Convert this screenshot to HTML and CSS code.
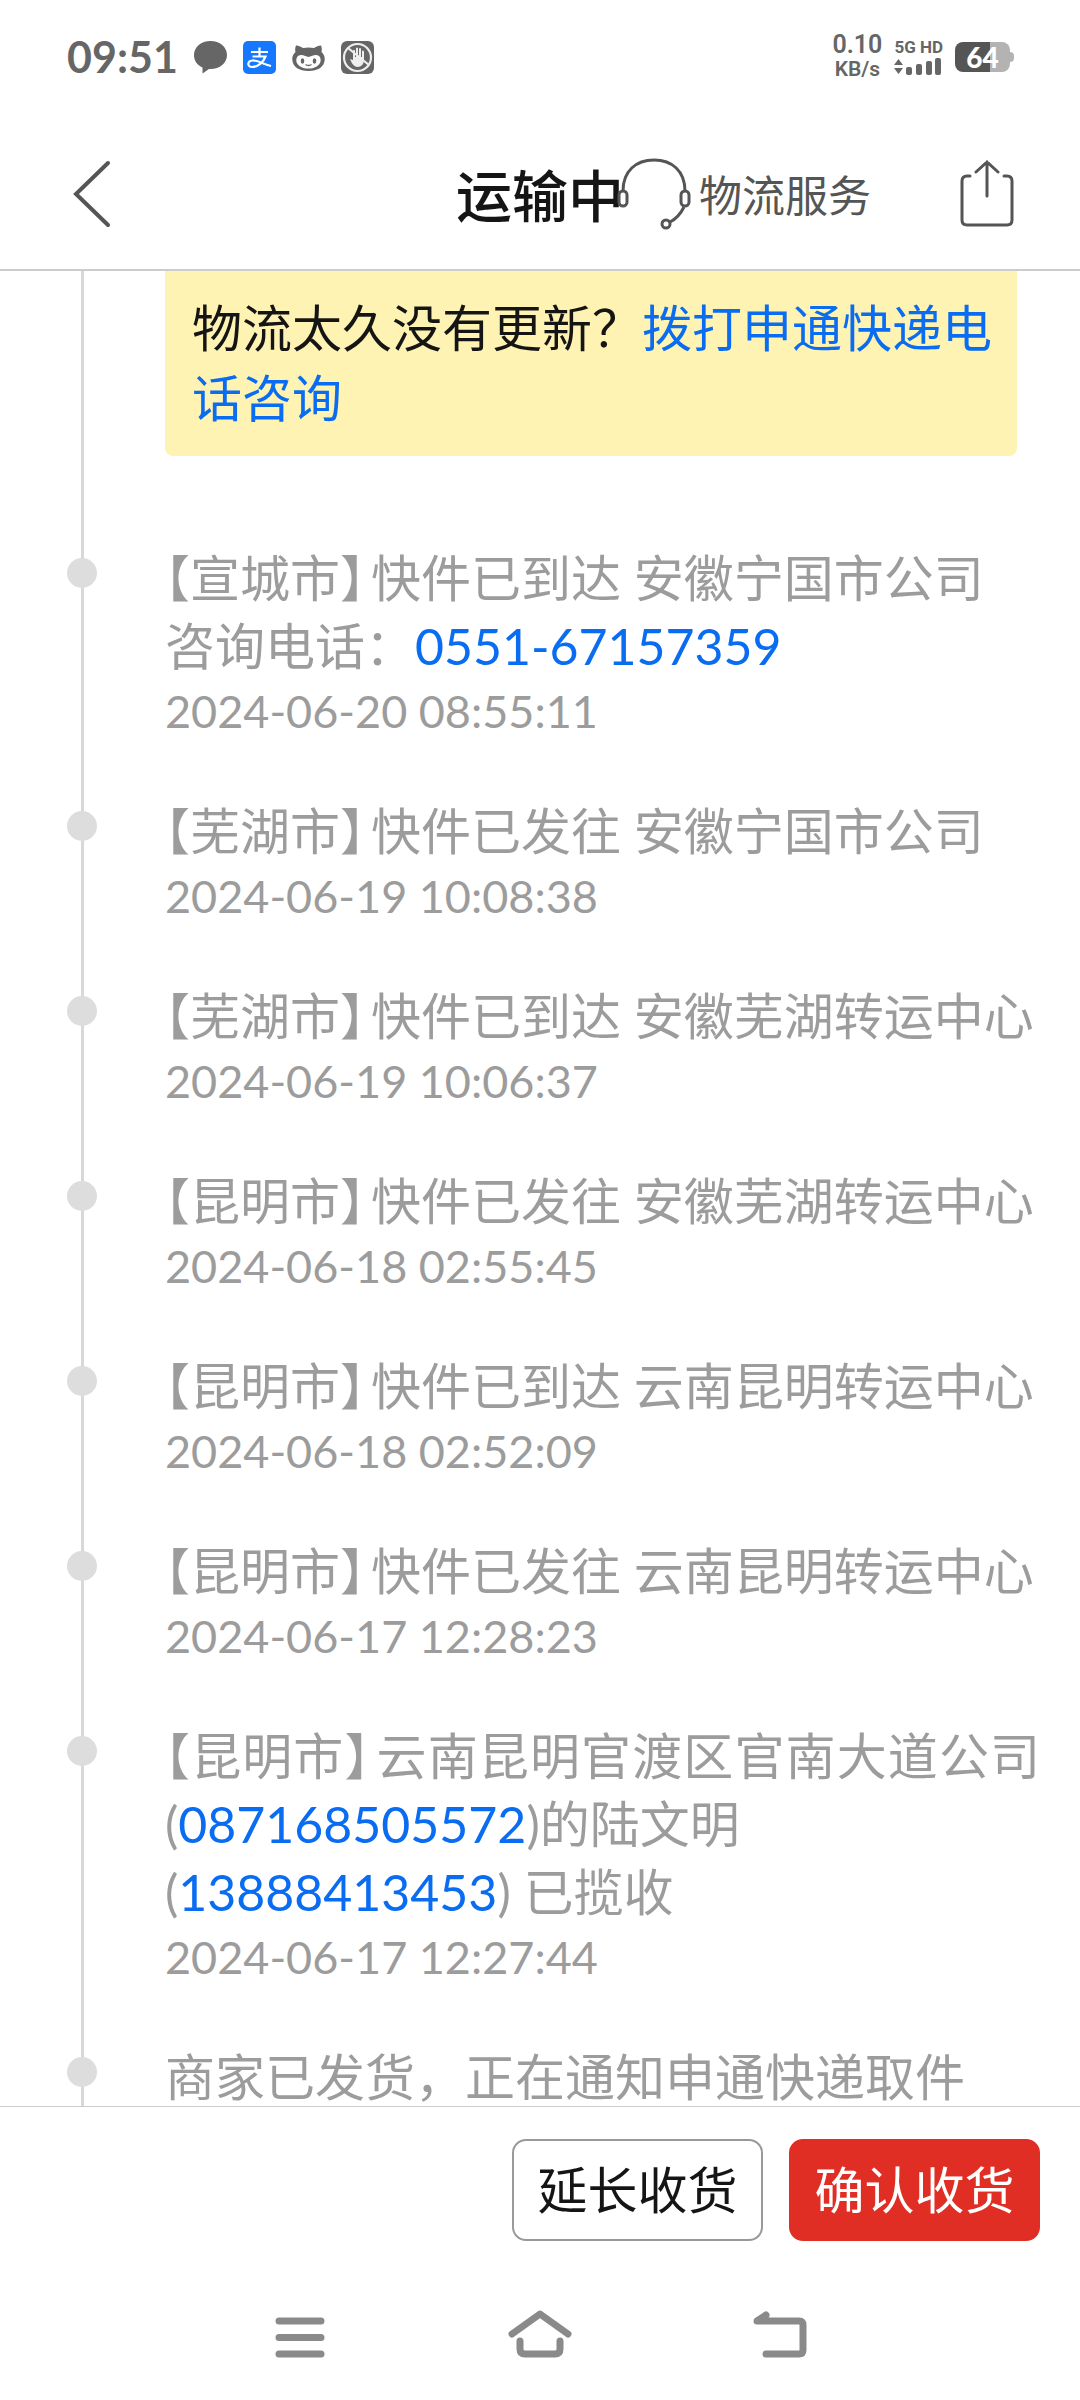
FILE: index.html
```html
<!DOCTYPE html>
<html lang="zh-CN">
<head>
<meta charset="utf-8">
<meta name="viewport" content="width=device-width, initial-scale=1">
<title>运输中</title>
<link rel="stylesheet" href="styles.css">
</head>
<body>
<div class="status">
  <div class="status-left">
    <span class="clock">09:51</span>
    <svg class="status-icon" viewBox="0 0 33 33" aria-hidden="true"><path fill="#666" d="M16.500 0C25.800 0 33 6 33 14S25.800 28 16.500 28L15 28 8.500 32.500V26.500C3 24 0 19.500 0 14 0 6 7.200 0 16.500 0Z"/></svg>
    <svg class="status-icon" viewBox="0 0 33 33" aria-hidden="true"><rect width="33" height="33" rx="5" fill="#1677ff"/><g fill="none" stroke="#fff" stroke-width="2.200"><path d="M8 11H25M16.500 6.500V15.500M9.500 15.500H22.500C20.500 21 15 26 9 26 4 26 4 20 9.500 19.500 15 19 21 23.500 28 25"/></g></svg>
    <svg class="status-icon" viewBox="0 0 33 33" aria-hidden="true"><path fill="#666" d="M4 4.500C7 4.500 9.500 6 11 7 15 6.300 18 6.300 22 7 23.500 6 26 4.500 29 4.500 30 7 30 9 29.500 11 32 13 33 16 32.700 19 32 26 26 30 16.500 30S1 26 .3 19C0 16 1 13 3.500 11 3 9 3 7 4 4.500Z"/><path fill="#fff" d="M6 15C10 12.500 14 16 16.500 16S23 12.500 27 15C31 19 28 27.500 16.500 27.500S2 19 6 15Z"/><g fill="#666"><ellipse cx="10.500" cy="20" rx="1.800" ry="2.800"/><ellipse cx="22.500" cy="20" rx="1.800" ry="2.800"/></g><path d="M13.500 23.500Q16.500 25.500 19.500 23.500" fill="none" stroke="#666" stroke-width="1.300"/></svg>
    <svg class="status-icon" viewBox="0 0 33 33" aria-hidden="true"><rect width="33" height="33" rx="6" fill="#666"/><circle cx="16.500" cy="16.500" r="13.500" fill="none" stroke="#eee" stroke-width="2.200"/><path fill="#eee" d="M9 18 12 19V9.500Q13 8 14 9.500V16H15V7Q16 6 17 7V16H18V7.500Q19 6.500 20 7.500V16H21V10Q22 9 23 10.500V19Q22.500 26 16.500 26 12 26 9 18Z"/><path d="M7 7 28 24" stroke="#eee" stroke-width="2.200"/></svg>
  </div>
  <div class="status-right">
    <div class="speed"><span class="speed-value">0.10</span><span class="speed-unit">KB/s</span></div>
    <div class="signal">
      <span class="signal-label">5G HD</span>
      <svg class="signal-bars" viewBox="0 0 48 17" aria-hidden="true"><g fill="#666"><path d="M0 7 4.500 1 9 7ZM0 10H9L4.500 16Z"/><rect x="12" y="9" width="6" height="8" rx="2"/><rect x="22" y="6" width="6" height="11" rx="2"/><rect x="32" y="3" width="6" height="14" rx="2"/><rect x="41" y="0" width="6" height="17" rx="2"/></g></svg>
    </div>
    <div class="battery">64</div>
  </div>
</div>

<header class="header">
  <button class="icon-button back" type="button" aria-label="返回"><svg width="38" height="68" viewBox="0 0 38 68"><path d="M35 3 3 34 35 65" fill="none" stroke="#555" stroke-width="4" stroke-linecap="round"/></svg></button>
  <h1 class="title">运输中</h1>
  <div class="header-right">
    <a class="service" href="#service">
      <svg width="74" height="72" viewBox="0 0 74 72" aria-hidden="true"><g fill="none" stroke="#555" stroke-width="3"><path d="M6 33C6 13 19 2 37 2S68 13 68 33M67 49C63 57 59 61 53 64"/><rect x="2" y="33" width="8" height="15" rx="4"/><rect x="64" y="33" width="8" height="15" rx="4"/><circle cx="49" cy="66" r="4"/></g></svg>
      <span class="service-label">物流服务</span>
    </a>
    <button class="icon-button" type="button" aria-label="分享"><svg width="54" height="68" viewBox="0 0 54 68"><path d="M10 16H7Q2 16 2 21V60Q2 65 7 65H47Q52 65 52 60V21Q52 16 47 16H44M27 36V2M16 12 27 2 38 12" fill="none" stroke="#555" stroke-width="3" stroke-linecap="round"/></svg></button>
  </div>
</header>

<main class="scroll">
  <div class="timeline">
    <p class="notice">物流太久没有更新？<a href="#call">拨打申通快递电话咨询</a></p>
    <ol class="events">
      <li class="event"><p><span class="open">【</span>宣城市<span class="close">】</span>快件已到达 安徽宁国市公司<br>咨询电话：<a href="tel:0551-67157359">0551-67157359</a></p><time>2024-06-20 08:55:11</time></li>
      <li class="event"><p><span class="open">【</span>芜湖市<span class="close">】</span>快件已发往 安徽宁国市公司</p><time>2024-06-19 10:08:38</time></li>
      <li class="event"><p><span class="open">【</span>芜湖市<span class="close">】</span>快件已到达 安徽芜湖转运中心</p><time>2024-06-19 10:06:37</time></li>
      <li class="event"><p><span class="open">【</span>昆明市<span class="close">】</span>快件已发往 安徽芜湖转运中心</p><time>2024-06-18 02:55:45</time></li>
      <li class="event"><p><span class="open">【</span>昆明市<span class="close">】</span>快件已到达 云南昆明转运中心</p><time>2024-06-18 02:52:09</time></li>
      <li class="event"><p><span class="open">【</span>昆明市<span class="close">】</span>快件已发往 云南昆明转运中心</p><time>2024-06-17 12:28:23</time></li>
      <li class="event"><p><span class="full-line"><span class="open">【</span>昆明市<span class="close">】</span>云南昆明官渡区官南大道公司</span>(<a href="tel:087168505572">087168505572</a>)的陆文明<br>(<a href="tel:13888413453">13888413453</a>) 已揽收</p><time>2024-06-17 12:27:44</time></li>
      <li class="event"><p>商家已发货，正在通知申通快递取件</p></li>
    </ol>
  </div>
</main>

<footer class="actions">
  <button class="action" type="button">延长收货</button>
  <button class="action primary" type="button">确认收货</button>
</footer>

<nav class="system-nav" aria-label="系统导航">
  <button class="icon-button" type="button" aria-label="最近任务"><svg width="64" height="48" viewBox="0 0 64 48"><path d="M11 11H53M11 27.500H53M11 44H53" stroke="#8a8a8a" stroke-width="7" stroke-linecap="round"/></svg></button>
  <button class="icon-button" type="button" aria-label="主页"><svg width="64" height="48" viewBox="0 0 64 48"><path d="M4 24 32 4 60 24M12 31V39Q12 44 17 44H47Q52 44 52 39V31" fill="none" stroke="#8a8a8a" stroke-width="7" stroke-linecap="round" stroke-linejoin="round"/></svg></button>
  <button class="icon-button" type="button" aria-label="后退"><svg width="64" height="48" viewBox="0 0 64 48"><path d="M18 44H51Q55 44 55 40V15Q55 11 51 11H9L18 5" fill="none" stroke="#8a8a8a" stroke-width="7" stroke-linecap="round" stroke-linejoin="round"/></svg></button>
</nav>
</body>
</html>
```
FILE: styles.css
```css
* {
  box-sizing: border-box;
}

body {
  margin: 0;
  height: 100vh;
  display: flex;
  flex-direction: column;
  background: #fff;
  color: #151515;
  font-family: Lato, "Noto Sans CJK SC", sans-serif;
  font-size: 50px;
}

a {
  color: #0a6cf0;
  text-decoration: none;
}

button {
  font: inherit;
  cursor: pointer;
}

svg {
  display: block;
}

.icon-button {
  padding: 0;
  border: 0;
  background: none;
}

/* Status bar */
.status {
  height: 116px;
  flex: none;
  display: flex;
  align-items: center;
  justify-content: space-between;
  padding: 0 70px 2px 67px;
  color: #666;
}

.status-left,
.status-right {
  display: flex;
  align-items: center;
}

.status-left {
  gap: 16px;
}

.status-right {
  gap: 12px;
}

.clock {
  width: 111px;
  font-size: 43px;
  font-weight: 700;
  line-height: 48px;
}

.status-icon {
  width: 33px;
  height: 33px;
}

.speed {
  display: flex;
  flex-direction: column;
  align-items: center;
  font-family: Roboto, sans-serif;
  font-weight: 600;
  line-height: 24px;
}

.speed-value {
  font-size: 25px;
}

.speed-unit {
  font-size: 21px;
}

.signal {
  display: flex;
  flex-direction: column;
  gap: 2px;
}

.signal-label {
  font-family: Roboto, sans-serif;
  font-size: 17px;
  font-weight: 700;
  line-height: 17px;
}

.signal-bars {
  width: 48px;
  height: 17px;
}

.battery {
  position: relative;
  width: 55px;
  height: 30px;
  border-radius: 8px;
  background: linear-gradient(90deg, #555 64%, #b3b3b3 64%);
  color: #fff;
  font-size: 28px;
  font-weight: 900;
  line-height: 30px;
  text-align: center;
}

.battery::after {
  content: "";
  position: absolute;
  left: 100%;
  top: 10px;
  width: 4px;
  height: 10px;
  border-radius: 0 4px 4px 0;
  background: #b3b3b3;
}

/* Page header */
.header {
  height: 155px;
  flex: none;
  display: grid;
  grid-template-columns: 1fr auto 1fr;
  align-items: center;
  padding-top: 2px;
  border-bottom: 2px solid #ccc;
}

.back {
  justify-self: start;
  margin-left: 73px;
}

.title {
  margin: 0;
  padding-top: 4px;
  font-size: 56px;
  font-weight: 500;
  line-height: 80px;
}

.header-right {
  display: flex;
  align-items: center;
  justify-content: space-between;
  margin-left: -7px;
  padding-right: 66px;
}

.service {
  display: flex;
  align-items: center;
  gap: 8px;
  color: #555;
  font-size: 43px;
  line-height: 64px;
}

.service-label {
  padding-top: 4px;
}

/* Tracking list */
.scroll {
  flex: 1;
  min-height: 0;
  overflow-y: auto;
  scrollbar-width: none;
}

.timeline {
  padding: 0 40px 0 165px;
  background: linear-gradient(#d8d8d8, #d8d8d8) 81px 0 / 3px 100% no-repeat;
}

.notice {
  margin: 0 23px 88px 0;
  padding: 22px 24px 23px 27px;
  border-radius: 0 0 8px 8px;
  background: #fef3b2;
  line-height: 70px;
}

.events {
  margin: 0;
  padding: 0;
  list-style: none;
}

.event {
  position: relative;
  padding-bottom: 55px;
  color: #9c9c9c;
}

.event:last-child {
  padding-bottom: 0;
}

.event::before {
  content: "";
  position: absolute;
  left: -98px;
  top: 14px;
  width: 30px;
  height: 30px;
  border-radius: 50%;
  background: #ddd;
}

.event p {
  margin: 0;
  line-height: 68px;
}

.event time {
  display: block;
  font-size: 45px;
  line-height: 62px;
}

.open,
.close {
  font-feature-settings: "halt";
}

.close {
  margin-right: 6px;
}

.full-line {
  display: block;
  text-align-last: justify;
}

/* Bottom actions */
.actions {
  flex: none;
  display: flex;
  justify-content: flex-end;
  gap: 26px;
  padding: 32px 40px;
  border-top: 1px solid #ccc;
}

.action {
  width: 251px;
  height: 102px;
  padding: 0 0 6px;
  border: 2px solid #999;
  border-radius: 14px;
  background: #fff;
  color: #151515;
}

.primary {
  border-color: #e02e24;
  background: #e02e24;
  color: #fff;
}

.system-nav {
  flex: none;
  display: flex;
  justify-content: center;
  padding: 37px 0 42px;
}

.system-nav .icon-button {
  flex: 0 1 240px;
  display: flex;
  justify-content: center;
}
```
